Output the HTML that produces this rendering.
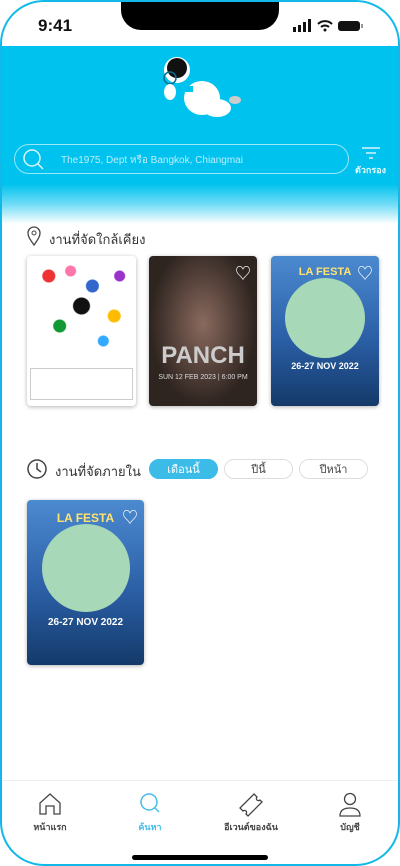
<!DOCTYPE html><html><head><meta charset="utf-8"><style>
*{margin:0;padding:0;box-sizing:border-box}
body{width:400px;height:866px;overflow:hidden;background:#fff;font-family:"Liberation Sans","Noto Sans CJK SC",sans-serif;position:relative}
.clip{position:absolute;inset:0;border-radius:44px;overflow:hidden;background:#fff}
.frame{position:absolute;inset:0;border:2px solid #12b9e8;border-radius:44px;pointer-events:none}
.hdr{position:absolute;left:0;right:0;top:46px;height:178px;background:linear-gradient(#00c2ee 0,#00c2ee 138px,#6fdcf6 158px,#fff 178px)}
.notch{position:absolute;left:121px;top:0;width:158px;height:30px;background:#000;border-radius:0 0 20px 20px}
.abs{position:absolute}
.t{font-size:13px;color:#333}
.chip{position:absolute;top:459px;height:20px;border-radius:10px;border:1px solid #ddd;font-size:11px;color:#444;text-align:center;line-height:20px;background:#fff}
.p{position:absolute;border-radius:4px;box-shadow:0 1px 4px rgba(0,0,0,.3);overflow:hidden}
.heart{position:absolute;right:6px;top:4px;color:#fff;font-size:16px}
.nav{position:absolute;top:820px;font-size:9px;font-weight:bold;color:#444;text-align:center;width:80px}
</style></head><body><div class="clip">
<div class="hdr"></div>
<div class="notch"></div>
<div class="abs" style="left:38px;top:16px;font-size:17px;font-weight:bold;color:#111">9:41</div>
<svg class="abs" style="left:292px;top:19px" width="80" height="14"><rect x="1" y="8" width="3" height="5" fill="#111"/><rect x="6" y="6" width="3" height="7" fill="#111"/><rect x="11" y="3" width="3" height="10" fill="#111"/><rect x="16" y="0" width="3" height="13" fill="#111"/><path d="M26 5a10 10 0 0 1 14 0M29 8a6 6 0 0 1 8 0" stroke="#111" stroke-width="2" fill="none"/><circle cx="33" cy="11" r="1.5" fill="#111"/><rect x="46" y="2" width="22" height="10" rx="3" fill="#111"/><rect x="69" y="5" width="2" height="4" fill="#999"/></svg>
<svg class="abs" style="left:155px;top:50px" width="90" height="80"><ellipse cx="47" cy="48" rx="18" ry="17" fill="#fff"/><ellipse cx="62" cy="58" rx="14" ry="9" fill="#fff"/><ellipse cx="80" cy="50" rx="6" ry="4" fill="#ccc"/><circle cx="22" cy="20" r="13" fill="#fff"/><circle cx="22" cy="18" r="10" fill="#111"/><circle cx="15" cy="28" r="6" fill="none" stroke="#0a6c8c" stroke-width="1.5"/><ellipse cx="15" cy="42" rx="6" ry="8" fill="#fff"/><rect x="28" y="36" width="10" height="6" fill="#00c2ee"/></svg>
<div class="abs" style="left:14px;top:144px;width:335px;height:30px;border:1.5px solid rgba(255,255,255,.6);border-radius:15px"></div>
<svg class="abs" style="left:22px;top:148px" width="24" height="24"><circle cx="10" cy="10" r="8" stroke="#d9f5fd" stroke-width="1.5" fill="none"/><path d="M16 16l5 5" stroke="#d9f5fd" stroke-width="1.5"/></svg>
<div class="abs" style="left:61px;top:153px;font-size:10px;color:#bdeefb">The1975, Dept หรือ Bangkok, Chiangmai</div>
<svg class="abs" style="left:360px;top:146px" width="22" height="14"><path d="M2 2h18M6 7h10M9 12h4" stroke="#d9f5fd" stroke-width="1.5"/></svg>
<div class="abs" style="left:355px;top:163px;font-size:9px;font-weight:bold;color:#e9fbff">ตัวกรอง</div>
<svg class="abs" style="left:26px;top:226px" width="16" height="20"><path d="M8 19C3 12 2 10 2 7a6 6 0 0 1 12 0c0 3-1 5-6 12z" stroke="#444" stroke-width="1.3" fill="none"/><circle cx="8" cy="7" r="2" stroke="#444" fill="none"/></svg>
<div class="abs t" style="left:49px;top:229px">งานที่จัดใกล้เคียง</div>
<div class="p" style="left:27px;top:256px;width:109px;height:150px;background:#fff"><div style="height:100px;background:radial-gradient(circle at 20% 20%,#e33 0 6px,transparent 7px),radial-gradient(circle at 60% 30%,#36c 0 6px,transparent 7px),radial-gradient(circle at 80% 60%,#fb0 0 6px,transparent 7px),radial-gradient(circle at 30% 70%,#193 0 6px,transparent 7px),radial-gradient(circle at 50% 50%,#111 0 8px,transparent 9px),radial-gradient(circle at 85% 20%,#93c 0 5px,transparent 6px),radial-gradient(circle at 40% 15%,#f7a 0 5px,transparent 6px),radial-gradient(circle at 70% 85%,#3af 0 5px,transparent 6px),#fff"></div><div style="margin:12px 3px 0;height:32px;border:1px solid #ccc"></div></div>
<div class="p" style="left:149px;top:256px;width:108px;height:150px;background:radial-gradient(ellipse at 50% 45%,#8a6a5e,#2e2420 70%)"><div class="heart">♡</div><div style="position:absolute;top:86px;width:100%;text-align:center;color:#ccc;font-size:24px;font-weight:bold">PANCH</div><div style="position:absolute;top:118px;width:100%;text-align:center;color:#ddd;font-size:7px">SUN 12 FEB 2023 | 6:00 PM</div></div>
<div class="p" style="left:271px;top:256px;width:108px;height:150px;background:linear-gradient(#4c8ad0,#2b5fa6 55%,#143a6a)"><div class="heart">♡</div><div style="position:absolute;top:10px;width:100%;text-align:center;color:#ffe36e;font-size:11px;font-weight:bold">LA FESTA</div><div style="position:absolute;left:14px;top:22px;width:80px;height:80px;border-radius:50%;background:#a7d8b8"></div><div style="position:absolute;top:105px;width:100%;text-align:center;color:#fff;font-size:9px;font-weight:bold">26-27 NOV 2022</div></div>
<svg class="abs" style="left:26px;top:458px" width="22" height="22"><circle cx="11" cy="11" r="9" stroke="#444" stroke-width="1.5" fill="none"/><path d="M11 5v6l4 3" stroke="#444" stroke-width="1.5" fill="none"/></svg>
<div class="abs t" style="left:55px;top:461px">งานที่จัดภายใน</div>
<div class="chip" style="left:149px;width:69px;background:#3bbbe8;border-color:#3bbbe8;color:#fff">เดือนนี้</div>
<div class="chip" style="left:224px;width:69px">ปีนี้</div>
<div class="chip" style="left:299px;width:69px">ปีหน้า</div>
<div class="p" style="left:27px;top:500px;width:117px;height:165px;background:linear-gradient(#4c8ad0,#2b5fa6 55%,#143a6a)"><div class="heart">♡</div><div style="position:absolute;top:11px;width:100%;text-align:center;color:#ffe36e;font-size:12px;font-weight:bold">LA FESTA</div><div style="position:absolute;left:15px;top:24px;width:88px;height:88px;border-radius:50%;background:#a7d8b8"></div><div style="position:absolute;top:117px;width:100%;text-align:center;color:#fff;font-size:10px;font-weight:bold">26-27 NOV 2022</div></div>
<div class="abs" style="left:0;right:0;top:780px;height:1px;background:#eee"></div>
<svg class="abs" style="left:38px;top:792px" width="24" height="24"><path d="M2 22V11L12 2l10 9v11h-6v-8H8v8z" stroke="#444" stroke-width="1.3" fill="none"/></svg>
<svg class="abs" style="left:138px;top:792px" width="24" height="24"><circle cx="11" cy="10" r="8" stroke="#45bde8" stroke-width="1.5" fill="none"/><path d="M17 16l4 4" stroke="#45bde8" stroke-width="1.5"/></svg>
<svg class="abs" style="left:238px;top:792px" width="26" height="26"><path d="M2 16L16 2l3 3a2 2 0 0 0 3 3l2 2-14 14-2-2a2 2 0 0 0-3-3z" stroke="#444" stroke-width="1.3" fill="none"/></svg>
<svg class="abs" style="left:338px;top:792px" width="24" height="26"><circle cx="12" cy="7" r="5.5" stroke="#444" stroke-width="1.3" fill="none"/><path d="M2 24c0-6 4-8 10-8s10 2 10 8z" stroke="#444" stroke-width="1.3" fill="none"/></svg>
<div class="nav" style="left:10px">หน้าแรก</div>
<div class="nav" style="left:110px;color:#45bde8">ค้นหา</div>
<div class="nav" style="left:211px">อีเวนต์ของฉัน</div>
<div class="nav" style="left:310px">บัญชี</div>
<div class="abs" style="left:132px;top:855px;width:136px;height:5px;border-radius:3px;background:#000"></div>
</div><div class="frame"></div></body></html>
